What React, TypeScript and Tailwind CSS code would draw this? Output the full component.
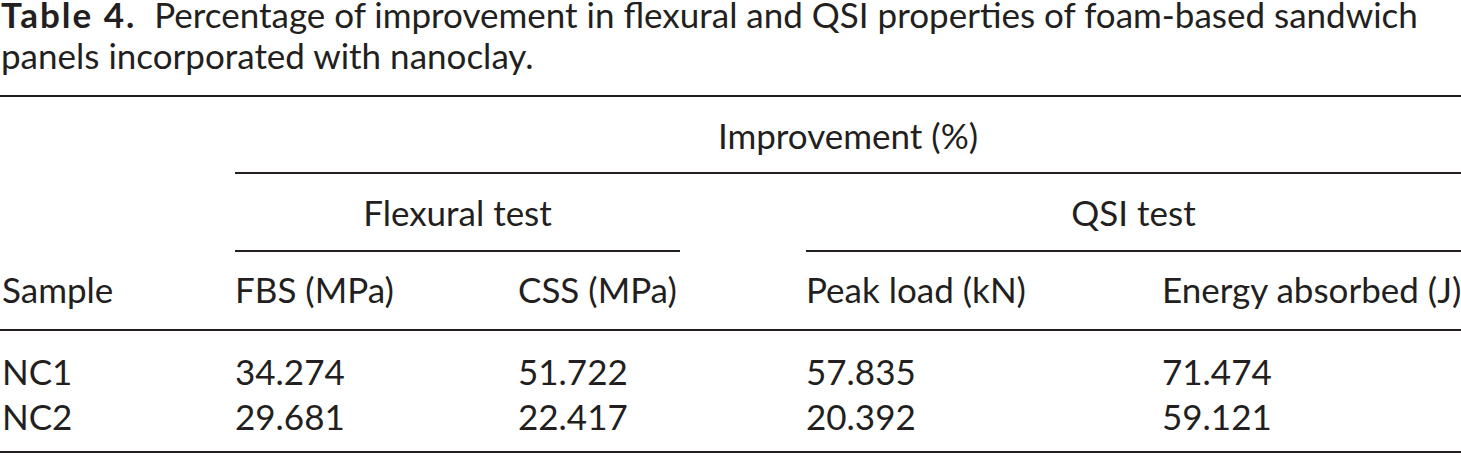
import React from "react";

// 表4: ナノクレイ添加フォームサンドイッチパネルの改善率

const rows = [
  { sample: "NC1", fbs: "34.274", css: "51.722", peak: "57.835", energy: "71.474" },
  { sample: "NC2", fbs: "29.681", css: "22.417", peak: "20.392", energy: "59.121" },
];

export default function App() {
  return (
    <div className="h-[457px] w-[1461px] overflow-hidden bg-white text-[#231f20] font-['Lato',sans-serif]">
      {/* キャプション */}
      <div className="pl-[1px] text-[35px] whitespace-nowrap">
        <p className="leading-[29px]">
          <span className="font-bold tracking-[2px]">Table 4.</span>&nbsp; Percentage of improvement in flexural and QSI properties of foam-based sandwich
        </p>
        <p className="leading-[52px]">panels incorporated with nanoclay.</p>
      </div>

      {/* 表 */}
      <div className="mt-[14px] border-t-2 border-[#231f20] grid grid-cols-[235px_283px_288px_356px_299px] text-[35px] whitespace-nowrap">
        <div className="col-start-2 col-span-4 flex h-[77px] items-center justify-center border-b-2 border-[#231f20] pt-[2px]">
          Improvement (%)
        </div>

        <div className="col-start-2 col-span-2 mr-[126px] flex h-[78px] items-center justify-center border-b-2 border-[#231f20]">
          Flexural test
        </div>
        <div className="col-span-2 flex h-[78px] items-center justify-center border-b-2 border-[#231f20]">
          QSI test
        </div>

        <div className="col-span-5 grid h-[79px] grid-cols-subgrid items-center border-b-2 border-[#231f20] pb-[3px]">
          <div className="pl-[2px]">Sample</div>
          <div>FBS (MPa)</div>
          <div>CSS (MPa)</div>
          <div>Peak load (kN)</div>
          <div>Energy absorbed (J)</div>
        </div>

        <div className="col-span-5 grid grid-cols-subgrid border-b-2 border-[#231f20] pt-[14px] pb-[16px]">
          {rows.map((r) => (
            <div key={r.sample} className="col-span-5 grid h-[45px] grid-cols-subgrid items-center">
              <div className="pl-[2px]">{r.sample}</div>
              <div>{r.fbs}</div>
              <div>{r.css}</div>
              <div>{r.peak}</div>
              <div>{r.energy}</div>
            </div>
          ))}
        </div>
      </div>
    </div>
  );
}
